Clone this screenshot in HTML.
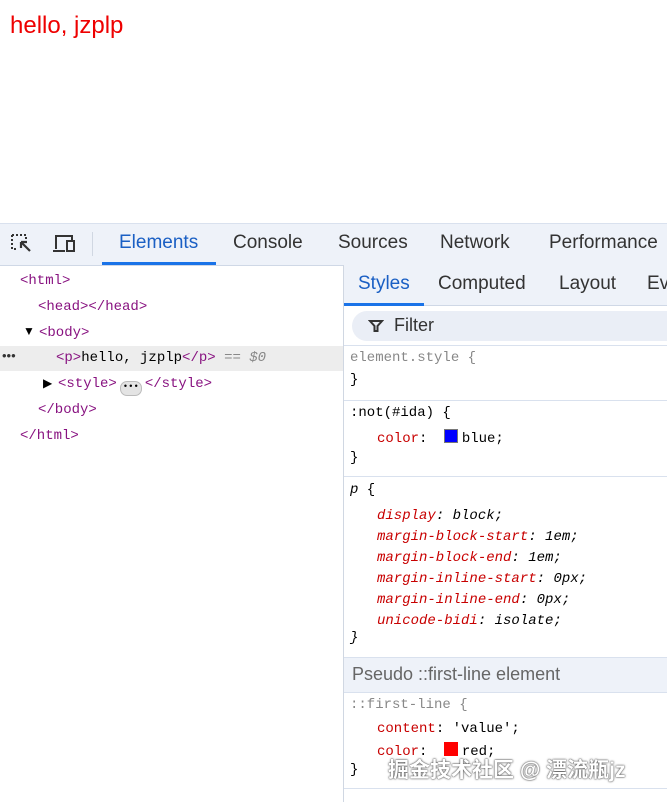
<!DOCTYPE html>
<html><head><style>
body{margin:0;width:667px;height:802px;overflow:hidden;background:#fff;font-family:"Liberation Sans",sans-serif;position:relative}
.a{position:absolute;white-space:nowrap}
.m{font-family:"Liberation Mono","Noto Sans CJK SC",monospace;font-size:14px}
.tag{color:#881280}.g{color:#888}.p{color:#c80000}.k{color:#222}
.hl{height:1px;background:#d9e1ee;position:absolute}
.sw{display:inline-block;width:12px;height:12px;border:1px solid #777;vertical-align:-1px;margin:0 4px 0 8px}
</style></head><body>
<div class="a" style="left:10px;top:12px;font-size:24px;color:#e00">hello, jzplp</div>
<div class="a" style="left:0;top:223px;width:667px;height:41px;background:#eef2f9;border-top:1px solid #d9e1ee;border-bottom:1px solid #cfd8e6"></div>
<svg class="a" style="left:10px;top:233px" width="24" height="22" viewBox="0 0 24 22"><path d="M2 2h14v5M2 2v14h5" fill="none" stroke="#333" stroke-width="2" stroke-dasharray="2 2"/><path d="M11 9l9 9M11 9h6M11 9v6" stroke="#333" stroke-width="2.2" fill="none"/></svg>
<svg class="a" style="left:52px;top:233px" width="26" height="22" viewBox="0 0 26 22"><path d="M4 16V3h16v4M1 18h12" fill="none" stroke="#333" stroke-width="2"/><rect x="15" y="8" width="7" height="10" fill="none" stroke="#333" stroke-width="2"/></svg>
<div class="a" style="left:92px;top:232px;width:1px;height:24px;background:#d0d7e2"></div>
<div class="a" style="left:119px;top:232px;font-size:19px;color:#1a5fc4">Elements</div>
<div class="a" style="left:102px;top:262px;width:114px;height:3px;background:#1a73e8"></div>
<div class="a" style="left:233px;top:232px;font-size:19px;color:#333">Console</div>
<div class="a" style="left:338px;top:232px;font-size:19px;color:#333">Sources</div>
<div class="a" style="left:440px;top:232px;font-size:19px;color:#333">Network</div>
<div class="a" style="left:549px;top:232px;font-size:19px;color:#333">Performance</div>
<div class="a" style="left:343px;top:265px;width:1px;height:537px;background:#d0d7e2"></div>
<div class="a m" style="left:20px;top:273px"><span class="tag">&lt;html&gt;</span></div>
<div class="a m" style="left:38px;top:299px"><span class="tag">&lt;head&gt;&lt;/head&gt;</span></div>
<div class="a" style="left:23px;top:324px;font-size:12px">▼</div>
<div class="a m" style="left:39px;top:325px"><span class="tag">&lt;body&gt;</span></div>
<div class="a" style="left:0;top:346px;width:343px;height:25px;background:#ededed"></div>
<div class="a" style="left:2px;top:348px;font-size:13px;color:#333">•••</div>
<div class="a m" style="left:56px;top:350px"><span class="tag">&lt;p&gt;</span>hello, jzplp<span class="tag">&lt;/p&gt;</span> <i class="g">== $0</i></div>
<div class="a" style="left:43px;top:376px;font-size:12px">▶</div>
<div class="a m" style="left:58px;top:376px"><span class="tag">&lt;style&gt;</span><span style="display:inline-block;width:20px;height:13px;border-radius:7px;background:#e4e4e4;border:1px solid #bbb;font-size:9px;text-align:center;vertical-align:-2px;margin:0 3px">•••</span><span class="tag">&lt;/style&gt;</span></div>
<div class="a m" style="left:38px;top:402px"><span class="tag">&lt;/body&gt;</span></div>
<div class="a m" style="left:20px;top:428px"><span class="tag">&lt;/html&gt;</span></div>
<div class="a" style="left:344px;top:265px;width:323px;height:40px;background:#eef2f9;border-bottom:1px solid #cfd8e6"></div>
<div class="a" style="left:358px;top:273px;font-size:19px;color:#1a5fc4">Styles</div>
<div class="a" style="left:344px;top:303px;width:80px;height:3px;background:#1a73e8"></div>
<div class="a" style="left:438px;top:273px;font-size:19px;color:#333">Computed</div>
<div class="a" style="left:559px;top:273px;font-size:19px;color:#333">Layout</div>
<div class="a" style="left:647px;top:273px;font-size:19px;color:#333">Ev</div>
<div class="a" style="left:352px;top:311px;width:330px;height:30px;border-radius:15px;background:#eaeef6"></div>
<svg class="a" style="left:368px;top:318px" width="16" height="16" viewBox="0 0 16 16"><path d="M2 3h12l-4.5 5v5h-3V8z" fill="none" stroke="#333" stroke-width="2"/></svg>
<div class="a" style="left:394px;top:315px;font-size:18px;color:#333">Filter</div>
<div class="hl" style="left:344px;top:345px;width:323px"></div>
<div class="a m g" style="left:350px;top:350px">element.style {</div>
<div class="a m" style="left:350px;top:372px">}</div>
<div class="hl" style="left:344px;top:400px;width:323px"></div>
<div class="a m" style="left:350px;top:405px">:not(#ida) {</div>
<div class="a m" style="left:377px;top:429px"><span class="p">color</span>: <span class="sw" style="background:#00f"></span>blue;</div>
<div class="a m" style="left:350px;top:450px">}</div>
<div class="hl" style="left:344px;top:476px;width:323px"></div>
<div class="a m" style="left:350px;top:482px"><i>p</i> {</div>
<div class="a m" style="left:377px;top:506px;line-height:21px;font-style:italic"><span class="p">display</span>: block;<br><span class="p">margin-block-start</span>: 1em;<br><span class="p">margin-block-end</span>: 1em;<br><span class="p">margin-inline-start</span>: 0px;<br><span class="p">margin-inline-end</span>: 0px;<br><span class="p">unicode-bidi</span>: isolate;</div>
<div class="a m" style="left:350px;top:630px"><i>}</i></div>
<div class="a" style="left:344px;top:657px;width:323px;height:34px;background:#eef2f9;border-top:1px solid #d9e1ee;border-bottom:1px solid #d9e1ee"></div>
<div class="a" style="left:352px;top:664px;font-size:18px;color:#666">Pseudo ::first-line element</div>
<div class="a m g" style="left:350px;top:697px">::first-line {</div>
<div class="a m" style="left:377px;top:721px"><span class="p">content</span>: 'value';</div>
<div class="a m" style="left:377px;top:742px"><span class="p">color</span>: <span class="sw" style="background:#f00;border-color:#f00"></span>red;</div>
<div class="a m" style="left:350px;top:762px">}</div>
<div class="hl" style="left:344px;top:788px;width:323px"></div>
<div class="a" style="left:388px;top:754px;font-size:21px;color:#fff;font-family:'Liberation Sans','Noto Sans CJK SC',sans-serif;font-weight:bold;text-shadow:0 0 2px #444,0 0 1px #444">掘金技术社区 @ 漂流瓶jz</div>
</body></html>
